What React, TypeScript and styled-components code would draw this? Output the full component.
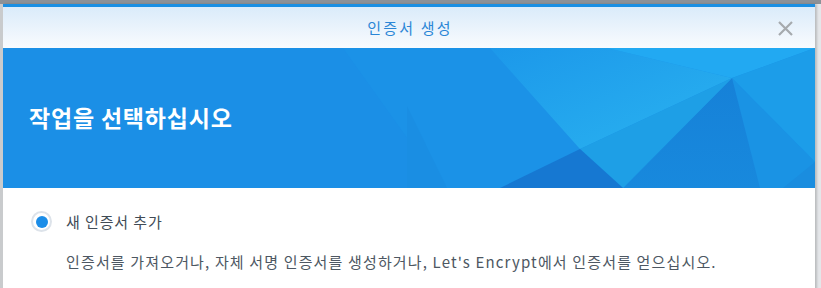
import React from "react";
import styled, { createGlobalStyle } from "styled-components";

const GlobalStyle = createGlobalStyle`
  html, body {
    margin: 0;
    padding: 0;
    background: #e4e6e9;
    font-family: "Noto Sans CJK KR", "Noto Sans", sans-serif;
    overflow: hidden;
  }
`;

const Backdrop = styled.div`
  height: 288px;
  border-top: 4px solid #8c9197;
  box-sizing: border-box;
  padding: 0 6px 0 3px;
  background: linear-gradient(90deg, #c9cbcd 0, #c9cbcd 3px, #e4e6e9 3px);
`;

const Dialog = styled.div`
  height: 100%;
  background: #ffffff;
  border-top: 3px solid #1a8fe3;
  box-shadow: 2px 0 2px rgba(0, 0, 0, 0.18);
  display: flex;
  flex-direction: column;
`;

const Header = styled.div`
  height: 41px;
  flex: 0 0 auto;
  display: flex;
  align-items: center;
  justify-content: center;
  position: relative;
  background: linear-gradient(180deg, #daebfa 0%, #f9fbfe 100%);
`;

const HeaderTitle = styled.span`
  font-size: 15px;
  color: #2a86d6;
  letter-spacing: 2.2px;
  padding-left: 2px;
`;

const CloseButton = styled.button`
  position: absolute;
  right: 21px;
  top: 12px;
  width: 18px;
  height: 18px;
  padding: 0;
  border: none;
  background: none;
  cursor: pointer;
  display: flex;
  align-items: center;
  justify-content: center;
`;

const Banner = styled.div`
  height: 140px;
  flex: 0 0 auto;
  position: relative;
  overflow: hidden;
  background: #1b8fe6;
  display: flex;
  align-items: center;
  padding-left: 26px;
`;

const BannerArt = styled.svg`
  position: absolute;
  left: 0;
  top: 0;
  width: 812px;
  height: 140px;
`;

const BannerTitle = styled.h1`
  position: relative;
  margin: 0 0 2px 0;
  font-size: 23px;
  font-weight: 700;
  color: #ffffff;
  letter-spacing: 0.8px;
`;

const Body = styled.div`
  padding: 23px 28px 0 28px;
  display: flex;
  flex-direction: column;
  gap: 19px;
`;

const OptionRow = styled.label`
  display: flex;
  align-items: center;
  gap: 14px;
  cursor: pointer;
`;

const Radio = styled.span<{ $checked: boolean }>`
  width: 17px;
  height: 17px;
  border-radius: 50%;
  border: 2px solid #dde3ea;
  background: #ffffff;
  display: flex;
  align-items: center;
  justify-content: center;
  flex: 0 0 auto;

  &::after {
    content: "";
    width: 12px;
    height: 12px;
    border-radius: 50%;
    background: ${(p) => (p.$checked ? "#1b8de8" : "transparent")};
  }
`;

const OptionLabel = styled.span`
  font-size: 15px;
  color: #414b55;
  letter-spacing: 0.9px;
`;

const Description = styled.p`
  margin: 0;
  padding-left: 35px;
  font-size: 15px;
  color: #4d5762;
  letter-spacing: 1.15px;
  white-space: nowrap;
`;

export default function App() {
  return (
    <>
      <GlobalStyle />
      <Backdrop>
        <Dialog>
          <Header>
            <HeaderTitle>인증서 생성</HeaderTitle>
            <CloseButton aria-label="닫기">
              <svg width="15" height="15" viewBox="0 0 15 15">
                <path d="M1 1 L14 14 M14 1 L1 14" stroke="#a6aaae" strokeWidth="2.2" />
              </svg>
            </CloseButton>
          </Header>
          <Banner>
            <BannerArt viewBox="0 0 812 140" preserveAspectRatio="none">
              <defs>
                <linearGradient id="hl" x1="0" y1="0" x2="1" y2="1">
                  <stop offset="0" stopColor="#1c98ea" />
                  <stop offset="1" stopColor="#2ab3f0" />
                </linearGradient>
                <linearGradient id="dk" x1="0" y1="0" x2="0" y2="1">
                  <stop offset="0" stopColor="#1681d8" />
                  <stop offset="1" stopColor="#1889dd" />
                </linearGradient>
              </defs>
              <polygon points="340,0 812,0 812,140 440,140" fill="#1b92e7" />
              <polygon points="404,58 444,140 404,140" fill="#1a8ee3" />
              <polygon points="487,0 604,0 729,30 577,101" fill="url(#hl)" />
              <polygon points="604,0 812,0 729,30" fill="#22a9f2" />
              <polygon points="729,30 812,0 812,114" fill="#1c9de9" />
              <polygon points="729,30 812,114 812,140 757,140" fill="#1a93e4" />
              <polygon points="729,30 757,140 620,140" fill="url(#dk)" />
              <polygon points="729,30 620,140 577,101" fill="#1e9fe6" />
              <polygon points="577,101 620,140 497,140" fill="#1678d2" />
              <polygon points="812,114 812,140 780,140" fill="#1a8ddf" />
            </BannerArt>
            <BannerTitle>작업을 선택하십시오</BannerTitle>
          </Banner>
          <Body>
            <OptionRow>
              <Radio $checked />
              <OptionLabel>새 인증서 추가</OptionLabel>
            </OptionRow>
            <Description>
              인증서를 가져오거나, 자체 서명 인증서를 생성하거나, Let's Encrypt에서 인증서를 얻으십시오.
            </Description>
          </Body>
        </Dialog>
      </Backdrop>
    </>
  );
}
